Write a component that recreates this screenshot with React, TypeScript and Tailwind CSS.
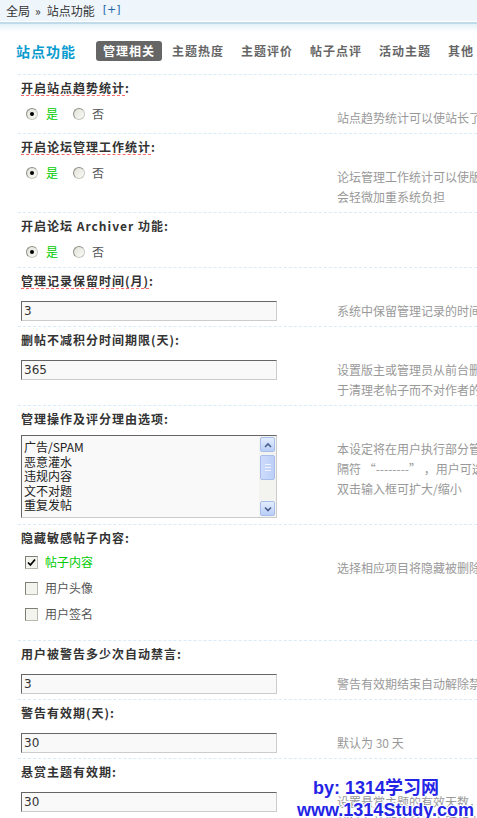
import React from "react";

function Radio({ checked }: { checked?: boolean }) {
  return (
    <span className="flex h-[12px] w-[12px] shrink-0 items-center justify-center rounded-full border border-[#8e8e86] border-r-[#c8c8c0] border-b-[#c8c8c0] bg-gradient-to-br from-[#e2e2da] to-[#fbfbf8]">
      {checked && <span className="h-[4px] w-[4px] rounded-full bg-black" />}
    </span>
  );
}

function Check({ checked }: { checked?: boolean }) {
  return (
    <span className="flex h-[13px] w-[13px] shrink-0 items-center justify-center border border-[#7f7f74] border-r-[#b8b8ae] border-b-[#b8b8ae] bg-[#f4f4ef]">
      {checked && (
        <svg width="9" height="9" viewBox="0 0 9 9">
          <path d="M1 4.5 L3.4 7 L8 1.5" fill="none" stroke="#000" strokeWidth="1.8" />
        </svg>
      )}
    </span>
  );
}

function Label({ text, dashed }: { text: string; dashed?: boolean }) {
  return (
    <div className="flex h-[26px] items-center pl-[3px] font-bold tracking-[1px] text-[#333]">
      {dashed ? (
        <>
          <span className="border-b border-dashed border-[#ff6666] leading-[14px]">{text}</span>
          <span>:</span>
        </>
      ) : (
        <span>{text}:</span>
      )}
    </div>
  );
}

function Field({ value }: { value: string }) {
  return (
    <input
      readOnly
      defaultValue={value}
      className="block h-[20px] w-[256px] border border-[#666] border-r-[#ccc] border-b-[#ccc] bg-[#f9f9f9] pl-[2px] font-['DejaVu_Sans',sans-serif] text-[12px] text-[#333] outline-none"
    />
  );
}

function YesNo() {
  return (
    <div className="flex h-[12px] items-center pl-[5px] mb-[4px]">
      <Radio checked />
      <span className="ml-[8px] text-[#00cc00]">是</span>
      <span className="ml-[15px]">
        <Radio />
      </span>
      <span className="ml-[7px] text-[#555]">否</span>
    </div>
  );
}

function Row({
  label,
  dashed,
  desc,
  children,
}: {
  label: string;
  dashed?: boolean;
  desc?: string[];
  children: React.ReactNode;
}) {
  return (
    <div className="border-t border-dashed border-[#d8ebf8]">
      <Label text={label} dashed={dashed} />
      <div className="flex pt-[7px] pb-[5px]">
        <div className="w-[316px] shrink-0 pl-[3px]">{children}</div>
        <div className="whitespace-nowrap pl-[3px] leading-[20px] text-[#999]">
          {desc?.map((d, i) => (
            <div key={i}>{d}</div>
          ))}
        </div>
      </div>
    </div>
  );
}

function ScrollBtn({ up }: { up?: boolean }) {
  return (
    <div className="flex h-[15px] w-[15px] items-center justify-center rounded-[2px] border border-[#a8bdec] bg-gradient-to-b from-[#e4edfd] to-[#b9cdf6]">
      <svg width="8" height="6" viewBox="0 0 8 6">
        <path
          d={up ? "M1 5 L4 2 L7 5" : "M1 1.5 L4 4.5 L7 1.5"}
          fill="none"
          stroke="#4a5f8c"
          strokeWidth="1.6"
        />
      </svg>
    </div>
  );
}

export default function App() {
  return (
    <div className="relative h-[818px] w-[477px] overflow-hidden bg-white font-['Noto_Sans_CJK_SC',sans-serif] text-[12px] text-[#333]">
      {/* breadcrumb */}
      <div className="flex h-[21px] items-center bg-[#eff6fb] pl-[6px]">
        <span>全局</span>
        <span className="ml-[5px]">»</span>
        <span className="ml-[6px]">站点功能</span>
        <span className="ml-[8px] font-['DejaVu_Sans',sans-serif] text-[11px] text-[#2366a8]">[+]</span>
      </div>
      <div className="h-[1px] bg-white" />
      <div className="h-[2px] bg-[#bfdbea]" />
      <div className="h-[8px] bg-gradient-to-b from-[#e4f1f8] to-white" />

      {/* title + tabs */}
      <div className="mt-[9px] mb-[13px] flex h-[20px] items-center pl-[16px]">
        <span className="w-[80px] shrink-0 text-[14px] font-bold tracking-[1px] text-[#0a9ccf]">站点功能</span>
        {["管理相关", "主题热度", "主题评价", "帖子点评", "活动主题", "其他"].map((t, i) => (
          <span
            key={t}
            className={
              i === 0
                ? "mr-[3px] flex h-[20px] shrink-0 items-center rounded-[3px] bg-[#666] px-[7px] font-bold tracking-[1px] text-white"
                : "mr-[3px] flex h-[20px] shrink-0 items-center px-[7px] font-bold tracking-[1px] text-[#666]"
            }
          >
            {t}
          </span>
        ))}
      </div>

      {/* settings table */}
      <div className="ml-[18px] w-[720px]">
        <Row label="开启站点趋势统计" dashed desc={["站点趋势统计可以使站长了解到站点的运行状况。提示：开启此项功能会轻微加重系统负担"]}>
          <YesNo />
        </Row>
        <Row
          label="开启论坛管理工作统计"
          dashed
          desc={["论坛管理工作统计可以使版主、超级版主和管理员的工作情况一目了然，但本功能", "会轻微加重系统负担"]}
        >
          <YesNo />
        </Row>
        <Row label="开启论坛 Archiver 功能">
          <YesNo />
        </Row>
        <Row label="管理记录保留时间(月)" dashed desc={["系统中保留管理记录的时间，默认为 3 个月，建议在 3～6 个月的范围内取值"]}>
          <Field value="3" />
        </Row>
        <Row
          label="删帖不减积分时间期限(天)"
          desc={["设置版主或管理员从前台删除超过此天数的帖子时不扣除用户积分，可用", "于清理老帖子而不对作者的积分造成损失。0 为不使用此功能"]}
        >
          <Field value="365" />
        </Row>
        <Row
          label="管理操作及评分理由选项"
          desc={[
            "本设定将在用户执行部分管理操作时显示，每个理由一行，如果空行则显示一行分",
            "隔符 “--------” ，用户可选择其中的某个理由作为操作说明",
            "双击输入框可扩大/缩小",
          ]}
        >
          <div className="-mt-[4px] mb-[1px] flex h-[83px] w-[256px] border border-[#666] border-r-[#ccc] border-b-[#ccc] bg-[#f9f9f9]">
            <div className="flex-1 overflow-hidden pt-[4px] pl-[2px] leading-[14.5px] text-[#222]">
              <div>广告/SPAM</div>
              <div>恶意灌水</div>
              <div>违规内容</div>
              <div>文不对题</div>
              <div>重复发帖</div>
            </div>
            <div className="flex w-[17px] flex-col bg-[#f3f3ef] p-[1px]">
              <ScrollBtn up />
              <div className="mt-[3px] flex h-[25px] w-[15px] flex-col items-center justify-center gap-[2px] rounded-[2px] border border-[#a8bdec] bg-gradient-to-r from-[#cddcfb] to-[#bccff7]">
                <span className="h-[1px] w-[6px] bg-[#eef4ff]" />
                <span className="h-[1px] w-[6px] bg-[#eef4ff]" />
                <span className="h-[1px] w-[6px] bg-[#eef4ff]" />
              </div>
              <div className="flex-1" />
              <ScrollBtn />
            </div>
          </div>
        </Row>
        <Row label="隐藏敏感帖子内容" desc={["选择相应项目将隐藏被删除用户的相关内容"]}>
          <div className="-mt-[9px] mb-[8px]">
            {[
              ["帖子内容", true],
              ["用户头像", false],
              ["用户签名", false],
            ].map(([t, c]) => (
              <div key={t as string} className="flex h-[26px] items-center pl-[4px]">
                <Check checked={c as boolean} />
                <span className={c ? "ml-[7px] text-[#00cc00]" : "ml-[7px] text-[#555]"}>{t as string}</span>
              </div>
            ))}
          </div>
        </Row>
        <Row label="用户被警告多少次自动禁言" desc={["警告有效期结束自动解除禁言"]}>
          <Field value="3" />
        </Row>
        <Row label="警告有效期(天)" desc={["默认为 30 天"]}>
          <Field value="30" />
        </Row>
        <Row label="悬赏主题有效期" desc={["设置悬赏主题的有效天数，超过有效期后", "超过有效期的悬赏主题将自动关闭"]}>
          <Field value="30" />
        </Row>
      </div>

      {/* watermark */}
      <div className="absolute left-[297px] top-[777px] font-['Liberation_Sans','Noto_Sans_CJK_SC',sans-serif] text-[18px] font-bold leading-[22px] text-[#2424e6] [text-shadow:1px_1px_0_#fff,-1px_-1px_0_#fff,1px_-1px_0_#fff,-1px_1px_0_#fff]">
        <div className="pl-[16px]">by: 1314学习网</div>
        <div>www.1314Study.com</div>
      </div>
    </div>
  );
}
